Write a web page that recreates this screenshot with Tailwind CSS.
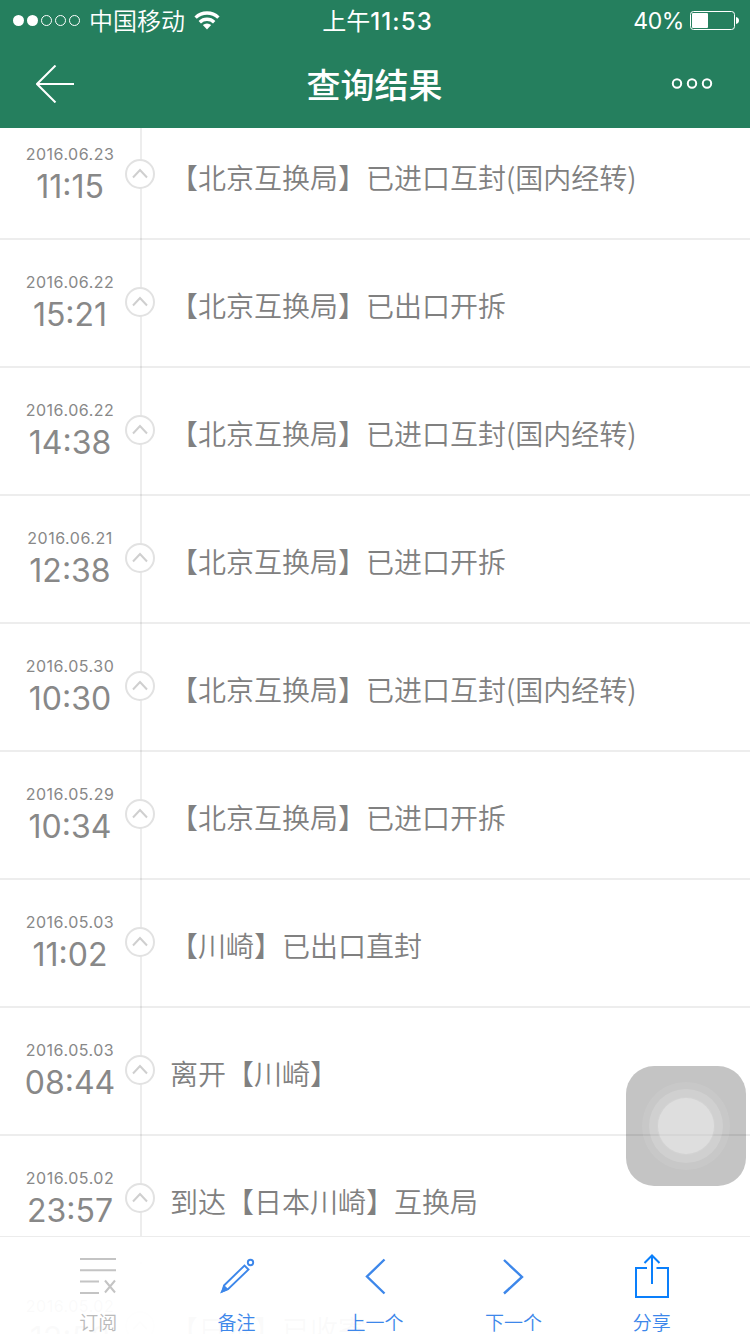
<!doctype html>
<html lang="zh-CN">

<head>
  <meta charset="UTF-8">
  <meta name="viewport" content="width=device-width, initial-scale=1.0">
  <title>查询结果</title>
  <script src="https://cdn.jsdelivr.net/npm/@tailwindcss/browser@4"></script>
</head>

<body class="bg-white font-['Inter','Noto_Sans_CJK_SC',sans-serif]">
  <div class="relative flex flex-col w-[750px] h-[1334px] overflow-hidden">
    <header class="h-32 shrink-0 bg-[#257f5e] text-white z-10">
      <!-- status bar -->
      <div class="grid grid-cols-3 items-center h-10 text-2xl leading-9">
        <div class="flex items-center pl-[13px]">
          <svg class="w-[68px] h-3" viewBox="0 0 68 12" fill="none" stroke="#fff">
            <circle cx="5.5" cy="6.5" r="5.5" fill="#fff" stroke="none" />
            <circle cx="19.5" cy="6.5" r="5.5" fill="#fff" stroke="none" />
            <circle cx="33.5" cy="6.5" r="5" />
            <circle cx="47.5" cy="6.5" r="5" />
            <circle cx="61.5" cy="6.5" r="5" />
          </svg>
          <span class="pl-2 pt-[3px] font-[350]">中国移动</span>
          <svg class="ml-[9px] w-[26px] h-[19px]" viewBox="0 0 26 19" fill="none" stroke="#fff" stroke-width="3.4">
            <path d="M1.6 6.6a16.4 16.4 0 0 1 22.8 0" />
            <path d="M5.8 11.2a10.4 10.4 0 0 1 14.4 0" />
            <path d="M13 18.5l-4.2-4.4a6.2 6.2 0 0 1 8.4 0z" fill="#fff" stroke="none" />
          </svg>
        </div>
        <div class="text-center pl-[5px] pt-[3px] font-medium whitespace-nowrap"><span class="font-normal">上午</span><span class="tracking-[1.1px]">11:53</span></div>
        <div class="flex items-center justify-end pr-[11px]">
          <span class="text-[23px] pt-[2px] tracking-[-0.4px]">40%</span>
          <svg class="ml-[6px] w-[49px] h-[19px]" viewBox="0 0 49 19">
            <rect x=".5" y=".5" width="44" height="18" rx="3" fill="none" stroke="#fff" />
            <rect x="2" y="2" width="16" height="15" rx="1" fill="#fff" />
            <path d="M46 6c2 .4 3 1.600 3 3.500s-1 3.100-3 3.500z" fill="#fff" />
          </svg>
        </div>
      </div>
      <!-- title bar -->
      <div class="flex items-center justify-between h-[88px] pl-9 pr-[37px]">
        <svg class="w-[38px] h-[38px]" viewBox="0 0 38 38" fill="none" stroke="#fff" stroke-width="2">
          <path d="M19.500 .5L1 19l18.500 18.500M1 19h37" />
        </svg>
        <h1 class="text-[34px] font-medium pl-1 leading-[84px] font-['Noto_Sans_CJK_SC',sans-serif]">查询结果</h1>
        <svg class="w-[42px] h-[13px]" viewBox="0 0 42 13" fill="none" stroke="#fff" stroke-width="2">
          <circle cx="6" cy="5.500" r="4.200" />
          <circle cx="21" cy="5.500" r="4.200" />
          <circle cx="36" cy="5.500" r="4.200" />
        </svg>
      </div>
    </header>

    <ul id="list" class="-mt-4 text-[#888]"></ul>

    <!-- bottom toolbar, floats over the list -->
    <nav class="absolute inset-x-0 bottom-0 h-[98px] border-t border-[#ececec] bg-white/96 flex px-[29px] text-[19px] leading-5 font-[350] text-[#3d87ea]">
      <a class="flex-1 flex flex-col items-center pt-[18px] text-[#bbb]">
        <svg class="w-9 h-[42px] shrink-0" viewBox="0 0 36 42" fill="none" stroke="#c4c4c4" stroke-width="2">
          <path d="M0 4h36M0 15.300h36M0 26.500h19M0 38h19M25 25.500l10 12M35 25.500l-10 12" />
        </svg>
        <span class="pt-[17px]">订阅</span>
      </a>
      <a class="flex-1 flex flex-col items-center pt-[18px]">
        <svg class="w-9 h-[42px] shrink-0" viewBox="0 0 36 42" fill="none" stroke="#3d87ea" stroke-width="1.900">
          <path d="M5 30.500L25.500 10.500l4 4L9 34.200L3.500 36.500z" />
          <path d="M1 38.500l4-8.500 4.800 4.600z" fill="#3d87ea" stroke="none" />
          <circle cx="31.500" cy="7.500" r="2.700" />
        </svg>
        <span class="pt-[17px]">备注</span>
      </a>
      <a class="flex-1 flex flex-col items-center pt-[18px]">
        <svg class="w-9 h-[42px] shrink-0" viewBox="0 0 36 42" fill="none" stroke="#3d87ea" stroke-width="2.400">
          <path d="M27.500 4.500L10 21.500l17.500 17" />
        </svg>
        <span class="pt-[17px]">上一个</span>
      </a>
      <a class="flex-1 flex flex-col items-center pt-[18px]">
        <svg class="w-9 h-[42px] shrink-0" viewBox="0 0 36 42" fill="none" stroke="#3d87ea" stroke-width="2.400">
          <path d="M9 5l18 17L9 38.500" />
        </svg>
        <span class="pt-[17px]">下一个</span>
      </a>
      <a class="flex-1 flex flex-col items-center pt-[17px]">
        <svg class="w-9 h-11 shrink-0" viewBox="0 0 36 44" fill="none" stroke="#0a7ffb" stroke-width="2">
          <path d="M13 14H2v29h32V14H22.500M18 30V2M10.500 9L18 1.500 25.500 9" />
        </svg>
        <span class="pt-4">分享</span>
      </a>
    </nav>

    <!-- assistive touch -->
    <div class="absolute left-[626px] top-[1066px] w-[120px] h-[120px] rounded-[28px] bg-black/23 flex items-center justify-center">
      <div class="w-[88px] h-[88px] rounded-full bg-white/8 flex items-center justify-center">
        <div class="w-[74px] h-[74px] rounded-full bg-white/15 flex items-center justify-center">
          <div class="w-[58px] h-[58px] rounded-full bg-white/30 border border-black/5"></div>
        </div>
      </div>
    </div>
  </div>

  <template id="row">
    <li class="flex h-32 border-b-2 border-black/7">
      <div class="w-[140px] shrink-0 text-center pt-8">
        <p class="date text-base leading-5 tracking-[0.5px]"></p>
        <p class="time text-[32px] leading-[46px]"></p>
      </div>
      <div class="relative w-[2px] h-32 shrink-0 bg-black/7">
        <svg class="absolute -left-[15px] top-[47px] w-[30px] h-[30px]" viewBox="0 0 30 30" fill="none">
          <circle cx="15" cy="15" r="14" fill="#fff" stroke="#e2e2e2" stroke-width="2" />
          <path d="M8 18.500l7-7.500 7 7.500" stroke="#cfcfcf" stroke-width="2" />
        </svg>
      </div>
      <p class="text pl-7 pt-[45px] text-[28px] font-[350] text-[#808080] leading-10 whitespace-nowrap font-['Noto_Sans_CJK_SC',sans-serif]"></p>
    </li>
  </template>
</body>
<script>
  const rows = [
    ['2016.06.23', '11:15', '【北京互换局】已进口互封(国内经转)'],
    ['2016.06.22', '15:21', '【北京互换局】已出口开拆'],
    ['2016.06.22', '14:38', '【北京互换局】已进口互封(国内经转)'],
    ['2016.06.21', '12:38', '【北京互换局】已进口开拆'],
    ['2016.05.30', '10:30', '【北京互换局】已进口互封(国内经转)'],
    ['2016.05.29', '10:34', '【北京互换局】已进口开拆'],
    ['2016.05.03', '11:02', '【川崎】已出口直封'],
    ['2016.05.03', '08:44', '离开【川崎】'],
    ['2016.05.02', '23:57', '到达【日本川崎】互换局'],
    ['2016.05.02', '12:52', '【日本】已收寄'],
  ];
  const list = document.getElementById('list');
  const template = document.getElementById('row');
  rows.forEach(([date, time, text]) => {
    const row = template.content.cloneNode(true);
    row.querySelector('.date').textContent = date;
    row.querySelector('.time').textContent = time;
    row.querySelector('.text').textContent = text;
    list.appendChild(row);
  });
</script>

</html>
